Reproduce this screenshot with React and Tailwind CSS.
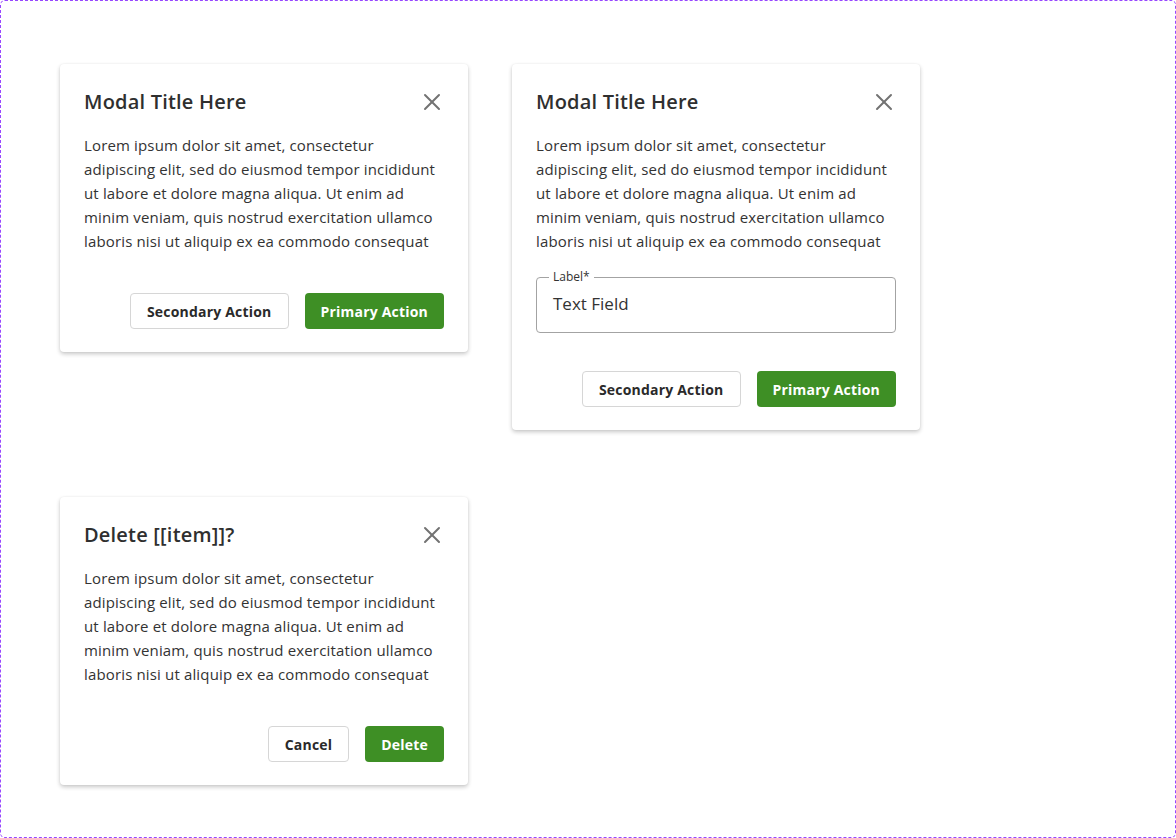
import { X } from "lucide-react"

const LINES = [
  "Lorem ipsum dolor sit amet, consectetur",
  "adipiscing elit, sed do eiusmod tempor incididunt",
  "ut labore et dolore magna aliqua. Ut enim ad",
  "minim veniam, quis nostrud exercitation ullamco",
  "laboris nisi ut aliquip ex ea commodo consequat",
]

function Body() {
  return (
    <p className="mt-[17px] text-[15px] leading-6 text-[#333333] tracking-[0.15px]">
      {LINES.map((l) => (
        <span key={l} className="block whitespace-nowrap">{l}</span>
      ))}
    </p>
  )
}

function Modal({ title, children, secondary, primary }) {
  return (
    <div className="w-[408px] bg-white rounded-[4px] shadow-[0_2px_4px_rgba(0,0,0,0.22),0_0_2px_rgba(0,0,0,0.06)] px-6 pt-6 pb-[23px]">
      {/* Header */}
      <div className="flex items-center justify-between h-7">
        <h2 className="text-[20px] font-semibold text-[#2f2f2f] leading-7 tracking-[0.2px]">{title}</h2>
        <button className="w-7 h-7 -mr-[2px] flex items-center justify-center text-[#737373]">
          <X size={28} strokeWidth={1.7} />
        </button>
      </div>
      <Body />
      {children}
      {/* Actions */}
      <div className="flex justify-end gap-4 mt-10">
        <button className="h-9 px-4 rounded-[4px] border border-[#d6d6d6] bg-white text-[14px] font-bold text-[#2a2a2a] tracking-[0.2px]">
          {secondary}
        </button>
        <button className="h-9 px-4 rounded-[4px] bg-[#3e8f25] text-[14px] font-bold text-white tracking-[0.2px]">
          {primary}
        </button>
      </div>
    </div>
  )
}

export default function App() {
  return (
    <div
      className="w-[1176px] h-[838px] bg-white border border-dashed border-[#9747ff] rounded-[5px] pl-[59px] pt-[63px]"
      style={{ fontFamily: "'Open Sans', Lato, sans-serif" }}
    >
      <div className="grid grid-cols-[408px_408px] gap-x-[44px] gap-y-[67px] items-start">
        <Modal title="Modal Title Here" secondary="Secondary Action" primary="Primary Action" />
        <Modal title="Modal Title Here" secondary="Secondary Action" primary="Primary Action">
          <fieldset className="mt-[17px] h-[63px] border border-[#a3a3a3] rounded-[4px] px-[12px] pb-0">
            <legend className="px-[4px] text-[12px] leading-[14px] text-[#333333]">Label*</legend>
            <div className="text-[17px] leading-6 text-[#333333] pl-[4px] mt-[8px]">Text Field</div>
          </fieldset>
          <div className="-mt-[2px]" />
        </Modal>
        <Modal title="Delete [[item]]?" secondary="Cancel" primary="Delete" />
      </div>
    </div>
  )
}
